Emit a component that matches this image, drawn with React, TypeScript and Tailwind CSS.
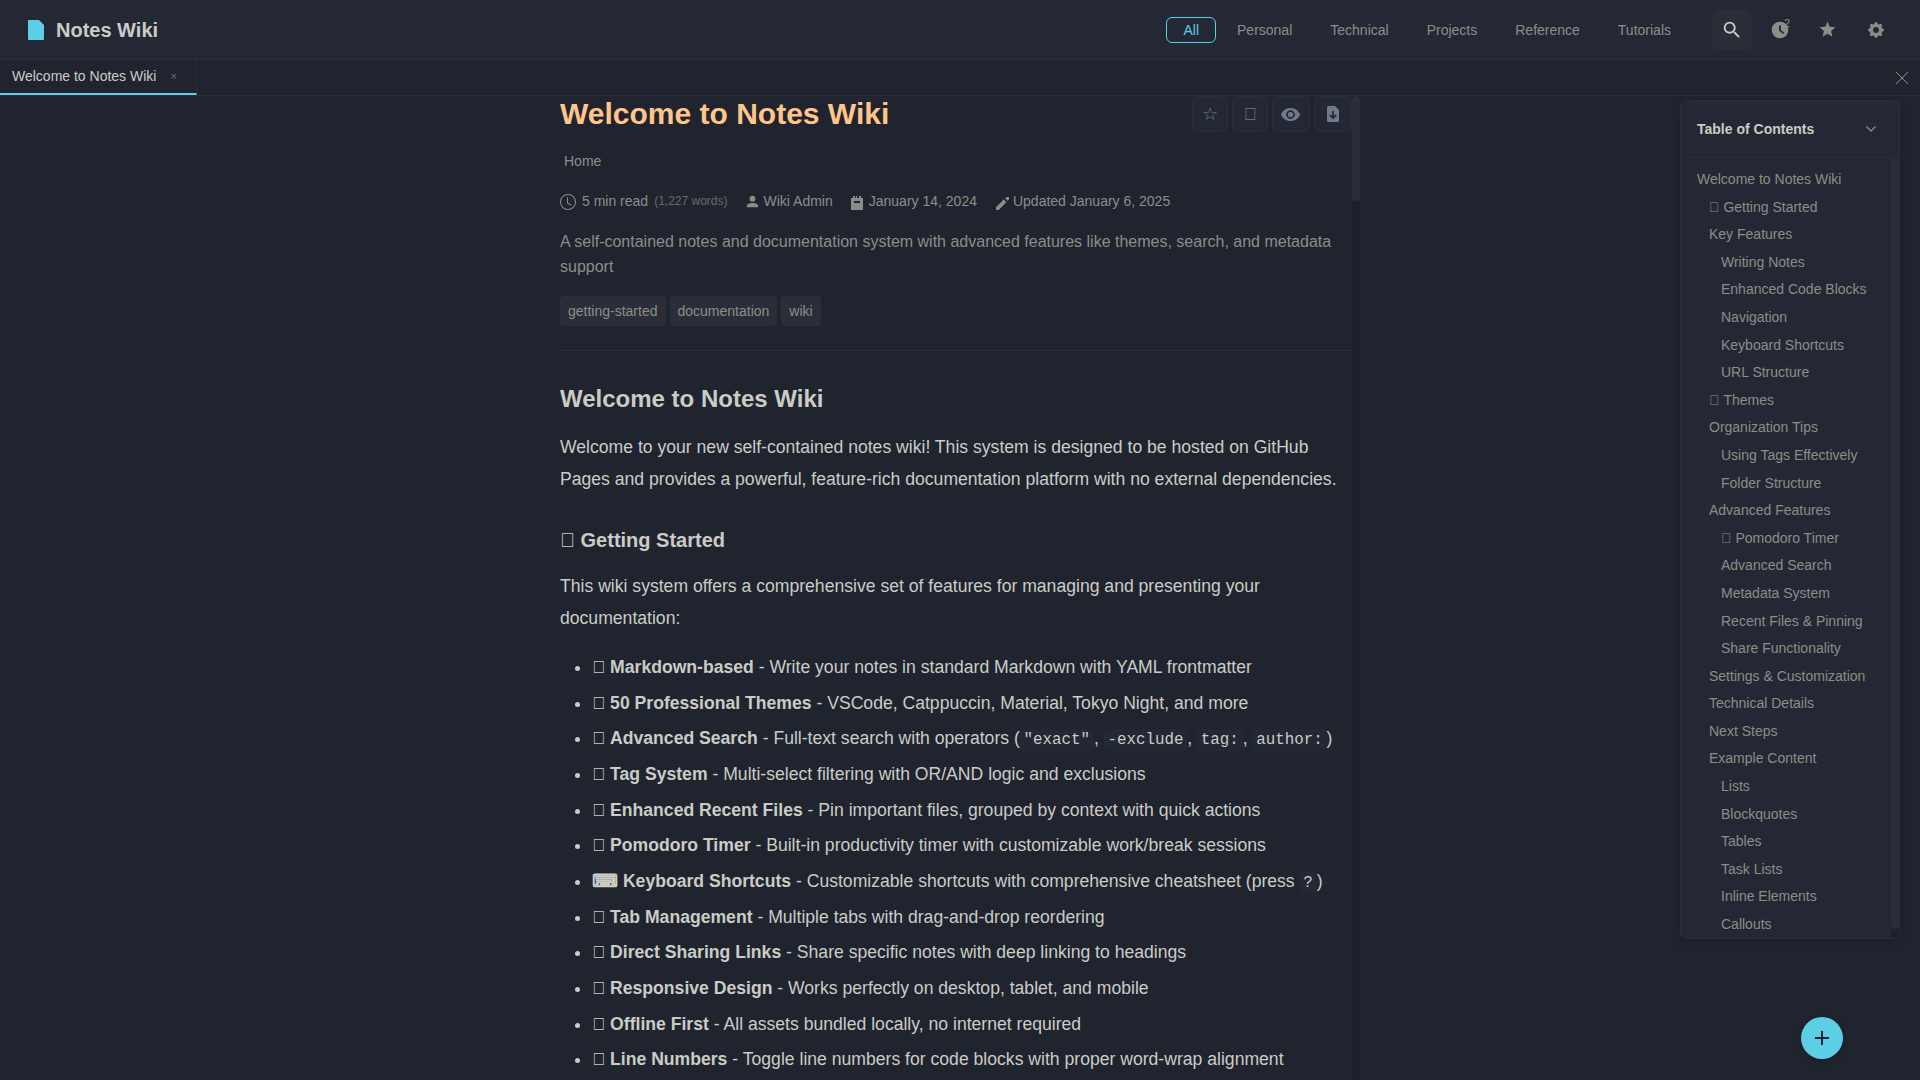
import React from "react";
import { BsClock, BsGearFill } from "react-icons/bs";

const nav = ["All", "Personal", "Technical", "Projects", "Reference", "Tutorials"];

// Private-use symbol, shown as the font's empty box.
const BOX = "\u{F0000}";

const toc: [number, string][] = [
  [0, "Welcome to Notes Wiki"],
  [1, `${BOX} Getting Started`],
  [1, "Key Features"],
  [2, "Writing Notes"],
  [2, "Enhanced Code Blocks"],
  [2, "Navigation"],
  [2, "Keyboard Shortcuts"],
  [2, "URL Structure"],
  [1, `${BOX} Themes`],
  [1, "Organization Tips"],
  [2, "Using Tags Effectively"],
  [2, "Folder Structure"],
  [1, "Advanced Features"],
  [2, `${BOX} Pomodoro Timer`],
  [2, "Advanced Search"],
  [2, "Metadata System"],
  [2, "Recent Files & Pinning"],
  [2, "Share Functionality"],
  [1, "Settings & Customization"],
  [1, "Technical Details"],
  [1, "Next Steps"],
  [1, "Example Content"],
  [2, "Lists"],
  [2, "Blockquotes"],
  [2, "Tables"],
  [2, "Task Lists"],
  [2, "Inline Elements"],
  [2, "Callouts"],
];
const indent = ["pl-4", "pl-7", "pl-10"];

function Code({ children }: { children: React.ReactNode }) {
  return (
    <code className="rounded-[4px] bg-[#242834] px-[3.8px] py-[2px] font-['Liberation_Mono',monospace] text-[15.84px] leading-none">
      {children}
    </code>
  );
}

const features: [string, string, React.ReactNode][] = [
  [BOX, "Markdown-based", "Write your notes in standard Markdown with YAML frontmatter"],
  [BOX, "50 Professional Themes", "VSCode, Catppuccin, Material, Tokyo Night, and more"],
  [
    BOX,
    "Advanced Search",
    <>
      Full-text search with operators (<Code>"exact"</Code>, <Code>-exclude</Code>, <Code>tag:</Code>,{" "}
      <Code>author:</Code>)
    </>,
  ],
  [BOX, "Tag System", "Multi-select filtering with OR/AND logic and exclusions"],
  [BOX, "Enhanced Recent Files", "Pin important files, grouped by context with quick actions"],
  [BOX, "Pomodoro Timer", "Built-in productivity timer with customizable work/break sessions"],
  [
    "⌨",
    "Keyboard Shortcuts",
    <>
      Customizable shortcuts with comprehensive cheatsheet (press <Code>?</Code>)
    </>,
  ],
  [BOX, "Tab Management", "Multiple tabs with drag-and-drop reordering"],
  [BOX, "Direct Sharing Links", "Share specific notes with deep linking to headings"],
  [BOX, "Responsive Design", "Works perfectly on desktop, tablet, and mobile"],
  [BOX, "Offline First", "All assets bundled locally, no internet required"],
  [BOX, "Line Numbers", "Toggle line numbers for code blocks with proper word-wrap alignment"],
];

function Icon({ d, className }: { d: string; className: string }) {
  return (
    <svg viewBox="0 0 24 24" fill="currentColor" className={className}>
      <path d={d} />
    </svg>
  );
}

const paths = {
  file: "M4 2h11l5 5v14a1 1 0 0 1-1 1H5a1 1 0 0 1-1-1Z",
  search:
    "M9.5 3A6.5 6.5 0 0 1 16 9.5c0 1.61-.59 3.09-1.56 4.23l.27.27h.79l5 5-1.5 1.5-5-5v-.79l-.27-.27A6.516 6.516 0 0 1 9.5 16 6.5 6.5 0 0 1 3 9.5 6.5 6.5 0 0 1 9.5 3m0 2C7 5 5 7 5 9.5S7 14 9.5 14 14 12 14 9.5 12 5 9.5 5Z",
  clock: "M12 2A10 10 0 0 0 2 12a10 10 0 0 0 10 10 10 10 0 0 0 10-10A10 10 0 0 0 12 2m4 14.8L10.8 13V6.5h2.2v5.6l4.2 3.2-1.2 1.5Z",
  star: "M12 17.27 18.18 21l-1.64-7.03L22 9.24l-7.19-.62L12 2 9.19 8.62 2 9.24l5.45 4.73L5.82 21 12 17.27Z",
  eye: "M12 9a3 3 0 0 0-3 3 3 3 0 0 0 3 3 3 3 0 0 0 3-3 3 3 0 0 0-3-3m0 8a5 5 0 0 1-5-5 5 5 0 0 1 5-5 5 5 0 0 1 5 5 5 5 0 0 1-5 5m0-12.5C7 4.5 2.73 7.61 1 12c1.73 4.39 6 7.5 11 7.5s9.27-3.11 11-7.5c-1.73-4.39-6-7.5-11-7.5Z",
  user: "M12 4a4 4 0 0 1 4 4 4 4 0 0 1-4 4 4 4 0 0 1-4-4 4 4 0 0 1 4-4m0 10c4.42 0 8 1.79 8 4v2H4v-2c0-2.21 3.58-4 8-4Z",
};

function HeaderButton({ active, children }: { active?: boolean; children: React.ReactNode }) {
  return (
    <button
      className={
        active
          ? "relative flex size-10 items-center justify-center rounded-md bg-[#2b2e39] text-[#cbccc6]"
          : "relative flex size-10 items-center justify-center rounded-md text-[#8d8d87]"
      }
    >
      {children}
    </button>
  );
}

const action = "flex h-9 items-center justify-center rounded-md border border-[#2b2e39] bg-[#232834] text-[#707a8c]";

export default function App() {
  return (
    <div className="relative flex h-[1080px] w-[1920px] flex-col overflow-hidden bg-[#20242f] font-['Liberation_Sans',Arial,sans-serif] text-[#cbccc6]">
      <header className="flex h-[60px] shrink-0 items-center border-b border-[#2b2e39] bg-[#242834] px-6">
        <Icon d={paths.file} className="size-6 text-[#5ccfe6]" />
        <span className="ml-2 text-xl font-bold">Notes Wiki</span>
        <nav className="mr-6 ml-auto flex gap-1">
          {nav.map((n, i) => (
            <button
              key={n}
              className={
                i === 0
                  ? "h-[26px] rounded-md border border-[#5ccfe6] px-4 text-sm leading-none text-[#5ccfe6]"
                  : "h-[26px] rounded-md border border-transparent px-4 text-sm leading-none text-[#8d8d87]"
              }
            >
              {n}
            </button>
          ))}
        </nav>
        <div className="flex gap-2">
          <HeaderButton active>
            <Icon d={paths.search} className="size-[22px]" />
          </HeaderButton>
          <HeaderButton>
            <Icon d={paths.clock} className="size-5" />
            <span className="absolute top-[6px] right-[10px] text-[11px] leading-[14px]">2</span>
          </HeaderButton>
          <HeaderButton>
            <Icon d={paths.star} className="-ml-px size-[19px]" />
          </HeaderButton>
          <HeaderButton>
            <BsGearFill className="size-4" />
          </HeaderButton>
        </div>
      </header>

      <div className="flex h-9 shrink-0 items-stretch justify-between border-b border-[#2b2e39]">
        <div className="flex w-[197px] items-center border-r border-b-2 border-r-[#2b2e39] border-b-[#5ccfe6] pl-3">
          <span className="mb-0.5 text-sm">Welcome to Notes Wiki</span>
          <span className="ml-[14px] text-[11px] text-[#6b7180]">×</span>
        </div>
        <div className="flex w-9 items-center justify-center">
          <svg viewBox="0 0 12 12" className="size-3 text-[#8d8d87]" stroke="currentColor">
            <path d="M0 0 12 12M12 0 0 12" />
          </svg>
        </div>
      </div>

      <div className="flex min-h-0 flex-1 justify-center">
        <div className="flex w-[800px]">
          <main className="w-[792px] overflow-hidden">
            <div className="flex h-9 items-start justify-between">
              <h1 className="text-[30px] leading-9 font-bold text-[#ffc58b]">Welcome to Notes Wiki</h1>
              <div className="flex gap-1">
                <button className={`${action} w-9 text-[17.6px]`}>☆</button>
                <button className={`${action} w-9 text-[17.6px]`}>{BOX}</button>
                <button className={`${action} w-[38px]`}>
                  <Icon d={paths.eye} className="-ml-px size-[21px]" />
                </button>
                <button className={`${action} w-[38px]`}>
                  <svg viewBox="0 0 12 16" className="h-4 w-3">
                    <path
                      d="M1.5 0H8l4 4v10.5a1.5 1.5 0 0 1-1.5 1.5h-9A1.5 1.5 0 0 1 0 14.5v-13A1.5 1.5 0 0 1 1.5 0Z"
                      fill="currentColor"
                    />
                    <path d="M6 5v7M2.8 8.8 6 12l3.2-3.2" fill="none" stroke="#232834" strokeWidth="1.7" />
                  </svg>
                </button>
              </div>
            </div>
            <div className="mt-[18px] pl-1 text-sm leading-[22px] text-[#8d8d87]">Home</div>
            <div className="mt-[18px] flex h-[22px] items-center text-sm text-[#8d8d87]">
              <BsClock className="mt-0.5 size-4" />
              <span className="ml-1.5">5 min read</span>
              <span className="ml-1.5 text-xs text-[#686a6c]">(1,227 words)</span>
              <Icon d={paths.user} className="mt-px -mr-px ml-4 size-[17px]" />
              <span className="ml-1">Wiki Admin</span>
              <svg viewBox="0 0 12 14" className="mt-1 ml-[18px] h-3.5 w-3" fill="currentColor">
                <path fillRule="evenodd" d="M0 2h2V0h2v2h1V0h1v2h2V0h2v2h2v12H0ZM3 5v2h6V5Z" />
              </svg>
              <span className="ml-1.5">January 14, 2024</span>
              <svg viewBox="0 0 13 13" className="mt-1 ml-[19px] size-[13px]" fill="currentColor">
                <path d="M0 10.3 7.7 2.6l2.7 2.7L2.7 13H0ZM9.2 1.6 10.8 0H13v2.2l-1.600 1.6Z" />
              </svg>
              <span className="ml-1">Updated January 6, 2025</span>
            </div>
            <p className="mt-[17px] text-base leading-[25px] text-[#8d8d87]">
              A self-contained notes and documentation system with advanced features like themes, search, and metadata
              support
            </p>
            <div className="mt-[17px] flex gap-1">
              {["getting-started", "documentation", "wiki"].map((t) => (
                <span key={t} className="h-[30px] rounded bg-[#2b2e39] px-2 text-sm leading-[30px] text-[#8d8d87]">
                  {t}
                </span>
              ))}
            </div>
            <div className="mt-6 border-t border-[#2b2e39]" />
            <h2 className="mt-8 text-2xl leading-[31px] font-bold">Welcome to Notes Wiki</h2>
            <div className="text-[17.6px] leading-[31.68px]">
              <p className="mt-[18px]">
                Welcome to your new self-contained notes wiki! This system is designed to be hosted on GitHub Pages and
                provides a powerful, feature-rich documentation platform with no external dependencies.
              </p>
              <h3 className="mt-8 text-xl leading-[26px] font-bold">{BOX} Getting Started</h3>
              <p className="mt-[18px]">
                This wiki system offers a comprehensive set of features for managing and presenting your documentation:
              </p>
              <ul className="mt-[17.1px] list-disc pl-8">
                {features.map(([icon, name, text]) => (
                  <li key={name} className="mb-1 h-[31.68px]">
                    <strong>
                      {icon} {name}
                    </strong>{" "}
                    - {text}
                  </li>
                ))}
              </ul>
            </div>
          </main>
          <div className="w-2 bg-[#1c202b]">
            <div className="h-[105px] rounded bg-[#2b2e39]" />
          </div>
        </div>
      </div>

      <aside className="absolute top-[100px] left-[1680px] flex h-[839px] w-[220px] flex-col overflow-hidden rounded-md border border-[#2b2e39] bg-[#242834] shadow-[0_4px_12px_rgba(0,0,0,0.15)]">
        <div className="flex h-[57px] shrink-0 items-center justify-between border-b border-[#2b2e39] pr-[23px] pl-4">
          <span className="text-sm font-bold">Table of Contents</span>
          <svg viewBox="0 0 10 6" className="h-1.5 w-2.5 text-[#8d8d87]" fill="none" stroke="currentColor" strokeWidth="1.3">
            <path d="M.5.5 5 5 9.5.5" />
          </svg>
        </div>
        <div className="flex min-h-0 flex-1">
          <div className="flex-1 pt-2 text-sm leading-[27.6px] whitespace-nowrap text-[#8d8d87]">
            {toc.map(([level, label]) => (
              <div key={label} className={indent[level]}>
                {label}
              </div>
            ))}
          </div>
          <div className="w-2 bg-[#1c202b]">
            <div className="h-[771px] rounded bg-[#2b2e39]" />
          </div>
        </div>
      </aside>

      <button className="absolute top-[1017px] left-[1801px] flex size-[42px] items-center justify-center rounded-full bg-[#5ccfe6] text-[#20242f] shadow-[0_2px_8px_rgba(0,0,0,0.2)]">
        <svg viewBox="0 0 14 14" className="size-3.5" stroke="currentColor" strokeWidth="2">
          <path d="M7 0v14M0 7h14" />
        </svg>
      </button>
    </div>
  );
}
